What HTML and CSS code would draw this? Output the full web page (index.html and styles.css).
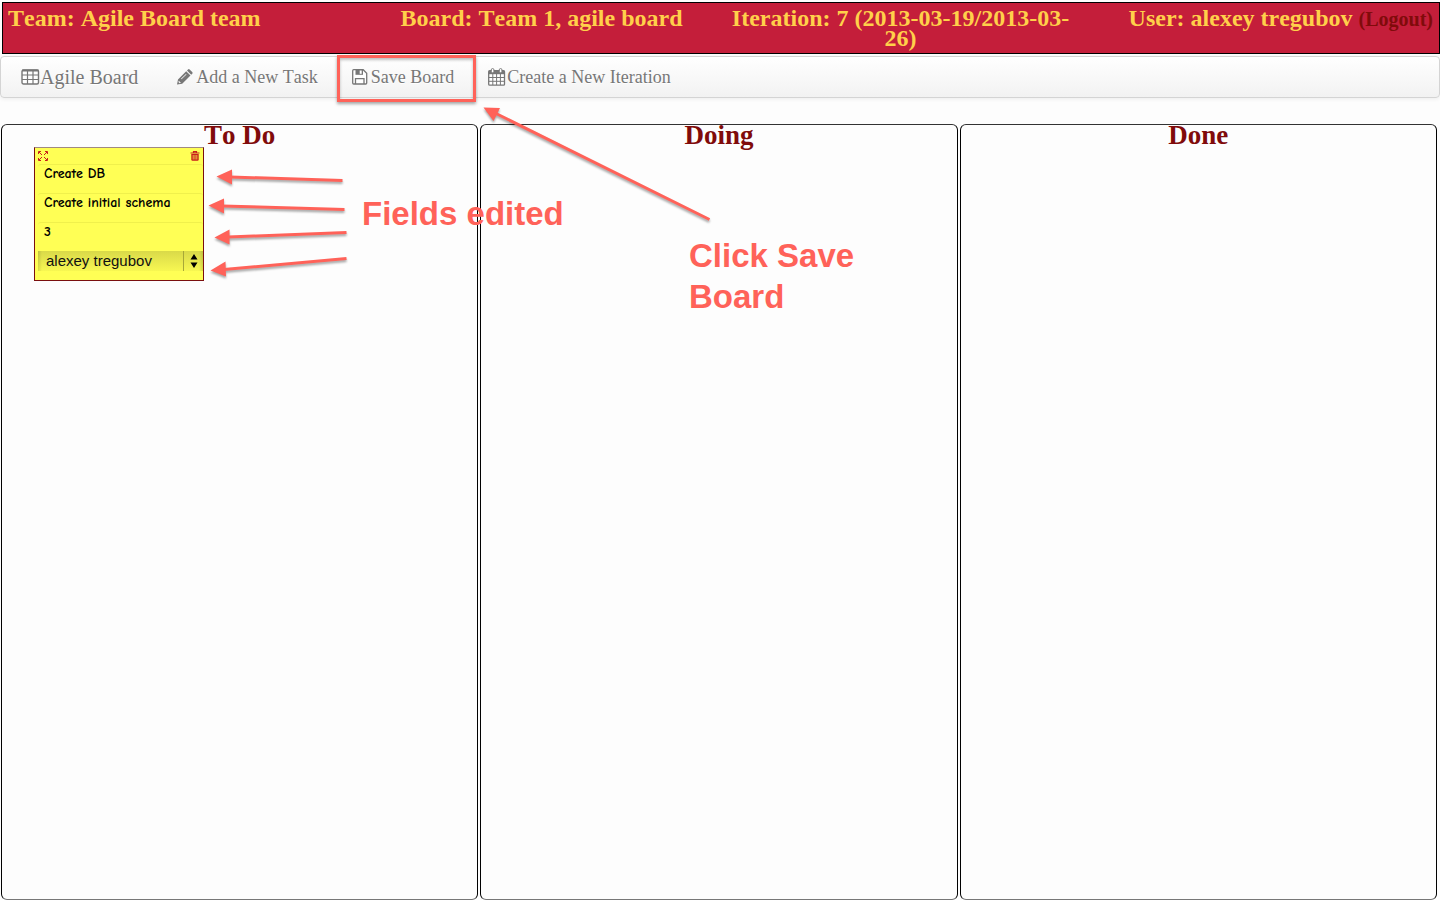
FILE: index.html
```html
<!DOCTYPE html>
<html lang="en">
<head>
<meta charset="utf-8">
<title>Agile Board</title>
<link rel="stylesheet" href="styles.css">
</head>
<body>
<div class="page">
  <header class="info">
    <div class="info-team">Team: Agile Board team</div>
    <div class="info-board">Board: Team 1, agile board</div>
    <div class="info-iteration">Iteration: 7 (2013-03-19/2013-03-26)</div>
    <div class="info-user">User: alexey tregubov <a class="logout" href="#">(Logout)</a></div>
  </header>

  <nav class="navbar">
    <a class="brand" href="#">
      <svg class="icon-table" viewBox="0 0 19 16" width="19" height="16" aria-hidden="true"><rect x="1" y="1" width="16.500" height="14" rx="1.500" fill="#fff" stroke="#777" stroke-width="1.400"/><path d="M1 1.500h16.500" stroke="#777" stroke-width="2"/><path d="M1 6h16.500M1 10.500h16.500M6.500 2v13M12 2v13" stroke="#777" stroke-width="1.200"/></svg><span>Agile Board</span>
    </a>
    <a class="item" href="#">
      <svg class="icon" viewBox="0 0 16 16" width="16" height="16" aria-hidden="true"><path fill="#777" fill-rule="evenodd" d="M0 15.500l1-5L9.200 2.300l4.300 4.300L5.200 14.800zM1.800 11.800l-.4 1.200 1.200 1.200 1.300-.4zM4 9.800l.5.500 5-4.900-.5-.5z"/><path fill="#777" d="M10 1.500l1-1q.8-.8 1.600 0l2.600 2.600q.8.800 0 1.600l-1 1z"/></svg><span>Add a New Task</span>
    </a>
    <a class="item item-marked" href="#">
      <svg class="icon" viewBox="0 0 16 16" width="16" height="16" aria-hidden="true"><path d="M.7 1.700q0-1 1-1h9.500l3.500 3.500v9.800q0 1-1 1h-12q-1 0-1-1z" fill="#fff" stroke="#777" stroke-width="1.300"/><path d="M3.500.8v5h7.500v-5" fill="#777"/><path d="M7.700 1.500h2v3.300h-2z" fill="#fff"/><path d="M3.500 15V9.700h8.500V15" fill="none" stroke="#777" stroke-width="1.300"/></svg><span>Save Board</span>
    </a>
    <a class="item item-calendar" href="#">
      <svg class="icon-calendar" viewBox="0 0 18 18" width="18" height="18" aria-hidden="true"><rect x=".7" y="2.700" width="15.800" height="14.500" rx="1" fill="#fff" stroke="#777" stroke-width="1.300"/><path d="M.7 2.700h15.800v3.500H.7z" fill="#777"/><path d="M.7 9.500h15.800M.7 13.300h15.800M4.800 6v11M8.600 6v11M12.400 6v11" stroke="#777"/><rect x="3.300" y=".6" width="2.600" height="4.200" rx="1.200" fill="#fff" stroke="#777"/><rect x="11.300" y=".6" width="2.600" height="4.200" rx="1.200" fill="#fff" stroke="#777"/></svg><span>Create a New Iteration</span>
    </a>
  </nav>

  <main class="board">
    <section class="column">
      <h2>To Do</h2>
      <form class="note">
        <div class="note-bar">
          <button type="button" aria-label="Expand"><svg viewBox="0 0 10 10" width="10" height="10"><path d="M.5 3V.5H3M7 .5h2.500V3M9.500 7v2.500H7M3 9.500H.5V7M1 1l3 3M9 1L6 4M9 9L6 6M1 9l3-3" fill="none" stroke="#c8201c"/></svg></button>
          <button type="button" aria-label="Delete"><svg viewBox="0 0 10 10" width="10" height="10"><path d="M.5 2h9M3.500 2V.7h3V2" fill="none" stroke="#c8201c" stroke-width="1.200"/><path d="M1.300 3h7.400v5.500q0 1.200-1.200 1.200h-5q-1.200 0-1.200-1.200z" fill="#c8201c"/><path d="M3.200 4v4.500M5 4v4.500M6.800 4v4.500" stroke="#ff5" stroke-width=".7"/></svg></button>
        </div>
        <input class="field" type="text" aria-label="Title" value="Create DB">
        <input class="field" type="text" aria-label="Description" value="Create initial schema">
        <input class="field" type="text" aria-label="Estimate" value="3">
        <div class="owner">
          <select aria-label="Owner"><option>alexey tregubov</option></select>
          <svg class="owner-arrows" viewBox="0 0 8 14" width="8" height="14" aria-hidden="true"><path d="M4 0l3.500 5.500H.5zM4 14L.5 8.500h7z"/></svg>
        </div>
      </form>
    </section>
    <section class="column"><h2>Doing</h2></section>
    <section class="column"><h2>Done</h2></section>
  </main>

  <div class="annotations">
    <svg class="arrows" viewBox="0 0 720 290" width="720" height="290" aria-hidden="true">
      <g stroke="#ff6259" stroke-width="3" fill="#ff6259">
        <path d="M230 177L342.500 180.500M222 206L344.500 209.500M228 237L346.500 232.500M224 269.500L346.500 258.500M495 113L709.500 219.500"/>
        <path stroke="none" d="M216.500 176.500L232 169.500V184.500zM208.500 205.500L224 198.500V213.500zM214.500 237.500L229.500 229.500V244.500zM210.500 270.500L225.500 261.500L226 276.500zM483.500 107.500L500 108L493.500 121z"/>
      </g>
    </svg>
    <p class="label label-fields">Fields edited</p>
    <p class="label label-save">Click Save<br>Board</p>
  </div>
</div>
</body>
</html>
```
FILE: styles.css
```css
* { box-sizing: border-box; }

body {
  margin: 0;
  background: #fdfdfd;
  font-family: "Liberation Serif", "Times New Roman", serif;
  font-kerning: none;
}

a { text-decoration: none; }

.page {
  position: relative;
  display: flex;
  flex-direction: column;
  min-height: 100vh;
  padding: 2px 0 0;
}

.info {
  display: grid;
  grid-template-columns: repeat(4, 1fr);
  margin-left: 2px;
  padding: 5px 0;
  border: 1px solid #000;
  background: #c41e3a;
  color: #ffd04a;
  font-size: 24px;
  font-weight: bold;
  line-height: 20px;
}

.info-team { padding-left: 5px; }
.info-board, .info-iteration { text-align: center; }
.info-user { padding-right: 6px; text-align: right; }
.logout { color: #800b0b; font-size: 20px; }

.navbar {
  display: flex;
  align-items: center;
  height: 42px;
  margin-top: 2px;
  border: 1px solid #d4d4d4;
  border-radius: 4px;
  background: linear-gradient(#fff, #f2f2f2);
  box-shadow: 0 1px 4px rgba(0, 0, 0, .07);
}

.brand, .item {
  display: flex;
  align-items: center;
  height: 40px;
  color: #777;
  text-shadow: 0 1px 0 #fff;
}

.brand { padding: 0 22px 0 20px; font-size: 20px; }
.item { gap: 3px; padding: 0 17px; font-size: 18px; }
.item-calendar { gap: 1px; }

.item-marked { position: relative; }
.item-marked::after {
  content: "";
  position: absolute;
  inset: -2px -5px -5px 2px;
  border: 3px solid #ff6259;
  box-shadow: 0 2px 3px rgba(0, 0, 0, .35), inset 0 2px 3px rgba(0, 0, 0, .25);
}

.board {
  flex: 1;
  display: grid;
  grid-template-columns: repeat(3, 1fr);
  gap: 2px;
  margin: 26px 3px 0 1px;
}

.column {
  border: 1px solid #000;
  border-top-color: #333;
  border-bottom-color: #777;
  border-radius: 6px;
}

.column h2 {
  margin: 0;
  padding-bottom: 2px;
  color: #800b0b;
  font-size: 27px;
  line-height: 20px;
  text-align: center;
}

.note {
  width: 170px;
  margin-left: 32px;
  padding: 0 0 9px 3px;
  border: 1px solid #7a0f0f;
  border-top-color: #a08a80;
  background: #ffff55;
}

.note-bar {
  display: flex;
  justify-content: space-between;
  align-items: center;
  height: 16px;
  padding-right: 3px;
}

.note button {
  display: flex;
  padding: 0;
  border: 0;
  background: none;
}

.field {
  display: block;
  width: 100%;
  height: 20px;
  margin: 0 0 9px;
  padding: 0 6px 2px;
  border: 0;
  border-top: 1px solid #f0f04c;
  border-radius: 3px;
  background: none;
  color: #000;
  font: bold 14px "Comic Sans MS", "Comic Neue", "Noto Sans", sans-serif;
}

.owner { position: relative; }

.owner select {
  display: block;
  appearance: none;
  width: 100%;
  height: 20px;
  padding: 0 24px 2px 8px;
  border: 0;
  border-radius: 0;
  background:
    linear-gradient(#a8a838, #a8a838) right 19px top / 1px 100% no-repeat,
    linear-gradient(90deg, rgba(0, 0, 0, .12), transparent 4px, transparent 161px, rgba(0, 0, 0, .12)),
    linear-gradient(#d9d949, #f7f752);
  color: #111;
  font: 15px "Liberation Sans", Arial, sans-serif;
}

.owner-arrows {
  position: absolute;
  top: 3px;
  right: 5px;
  pointer-events: none;
}

.annotations {
  position: absolute;
  top: 0;
  left: 0;
  pointer-events: none;
}

.arrows {
  display: block;
  filter: drop-shadow(0 2px 1px rgba(0, 0, 0, .35));
}

.label {
  position: absolute;
  margin: 0;
  color: #ff6259;
  font: bold 33px/41px "Liberation Sans", Arial, sans-serif;
  white-space: nowrap;
}

.label-fields { top: 193px; left: 362px; }
.label-save { top: 235px; left: 689px; }
```
